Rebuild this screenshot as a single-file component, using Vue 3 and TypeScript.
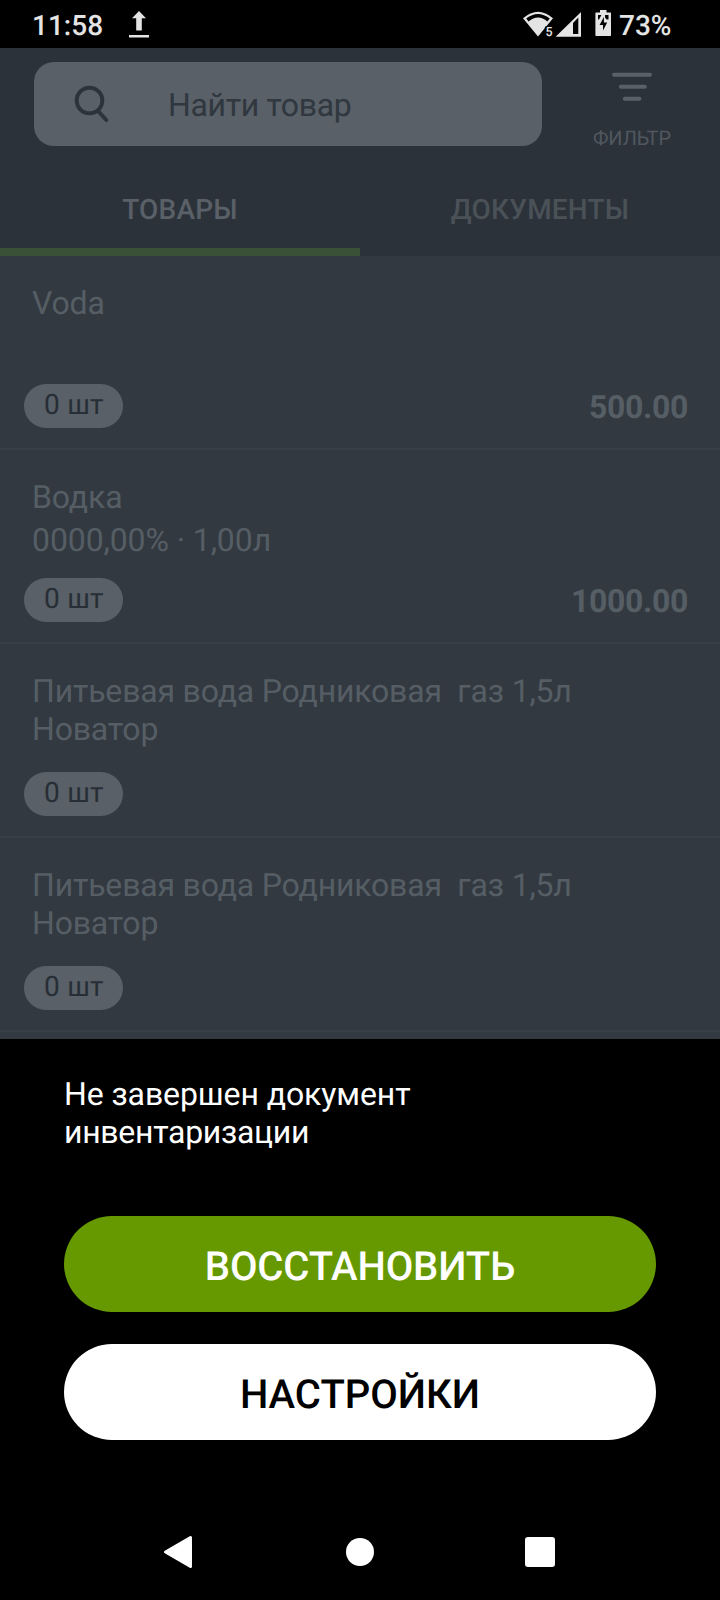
<script setup lang="ts">
interface Product {
  id: number
  lines: string[]
  quantity: string
  price?: string
  spaced?: boolean
}

const products: Product[] = [
  { id: 1, lines: ['Voda'], quantity: '0 шт', price: '500.00' },
  { id: 2, lines: ['Водка', '0000,00% · 1,00л'], quantity: '0 шт', price: '1000.00', spaced: true },
  { id: 3, lines: ['Питьевая вода Родниковая  газ 1,5л', 'Новатор'], quantity: '0 шт' },
  { id: 4, lines: ['Питьевая вода Родниковая  газ 1,5л', 'Новатор'], quantity: '0 шт' },
]
</script>

<template>
  <div class="screen">
    <div class="status">
      <span class="time">11:58</span>
      <svg class="upload" width="20" height="28" viewBox="0 0 20 28">
        <path d="M10 1 L17 8.3 H12.8 V20.5 H7.2 V8.3 H3 Z M0 25 H20 V27.6 H0 Z" fill="#e4e4e4" />
      </svg>
      <svg class="signals" width="90" height="30" viewBox="0 0 90 30">
        <path d="M1 9.2 Q16 -3.8 31 9.2 L16 27.5 Z" fill="#e4e4e4" />
        <path d="M4.2 9.6 Q16 0.6 27.8 9.6 L25.4 12.4 Q16 4.6 6.6 12.4 Z" fill="#000" />
        <path d="M23 17.5 H32 V29 H21.5 Z" fill="#000" />
        <text x="23.6" y="27.4" class="band">5</text>
        <path d="M33.6 27.8 L59 3 V27.8 Z" fill="#e4e4e4" />
        <path d="M51 14 L56.3 8.5 V25 H51 Z" fill="#000" />
        <path d="M78 1 H84.5 V3.5 H88.5 Q89 3.5 89 4.2 V26.2 Q89 27 88.2 27 H74.2 Q73.4 27 73.4 26.2 V4.2 Q73.4 3.5 74 3.5 H78 Z" fill="#e4e4e4" />
        <path d="M76 6 H79.4 L77 10.5 H76 Z M83 6 H86.5 V10.5 H84.6 L83 8.5 Z M81.9 8 V13.6 H85.2 L81 21.5 V16 H77.6 Z" fill="#000" />
      </svg>
      <span class="charge">73%</span>
    </div>

    <header class="header">
      <div class="tools">
        <div class="search">
          <svg width="36" height="38" viewBox="0 0 36 38" fill="none" stroke="#2c333b" stroke-width="4" stroke-linecap="round">
            <circle cx="15.5" cy="15.5" r="12.8" />
            <path d="M24.5 26.5 L32.3 35" />
          </svg>
          <span>Найти товар</span>
        </div>
        <div class="filter">
          <svg width="40" height="30" viewBox="0 0 40 30" stroke="#596067" stroke-width="4" stroke-linecap="round">
            <path d="M2 2.8 H38 M8.8 14.8 H32.8 M12.8 26.8 H27.4" />
          </svg>
          <span>ФИЛЬТР</span>
        </div>
      </div>
      <nav class="tabs">
        <div class="tab active">ТОВАРЫ</div>
        <div class="tab">ДОКУМЕНТЫ</div>
      </nav>
    </header>

    <main class="list">
      <article v-for="p in products" :key="p.id" class="row">
        <div class="title" :class="{ spaced: p.spaced }">
          <div v-for="line in p.lines" :key="line">{{ line }}</div>
        </div>
        <div class="bottom">
          <span class="pill">{{ p.quantity }}</span>
          <span v-if="p.price" class="price">{{ p.price }}</span>
        </div>
      </article>
    </main>

    <section class="sheet">
      <p class="message">Не завершен документ<br /><span>инвентаризации</span></p>
      <button class="btn primary">ВОССТАНОВИТЬ</button>
      <button class="btn">НАСТРОЙКИ</button>
    </section>

    <footer class="navbar">
      <svg width="34" height="34" viewBox="0 0 34 34"><path d="M4.5 17 L29.5 2.5 V31.5 Z" fill="#fff" stroke="#fff" stroke-width="3" stroke-linejoin="round" /></svg>
      <svg width="28" height="28" viewBox="0 0 28 28"><circle cx="14" cy="14" r="14" fill="#fff" /></svg>
      <svg width="30" height="30" viewBox="0 0 30 30"><rect width="30" height="30" rx="3" fill="#fff" /></svg>
    </footer>
  </div>
</template>

<style>
body {
  margin: 0;
  background: #000;
}
</style>

<style scoped>
.screen {
  width: 720px;
  height: 1600px;
  display: flex;
  flex-direction: column;
  overflow: hidden;
  background: #000;
  font-family: Roboto, "Liberation Sans", sans-serif;
  font-size: 32px;
  line-height: 38px;
  text-rendering: geometricPrecision;
}
.status {
  flex: none;
  height: 48px;
  box-sizing: border-box;
  padding: 11px 48px 0 32px;
  display: flex;
  align-items: flex-start;
  color: #e4e4e4;
  font-size: 28px;
  font-weight: 500;
  line-height: 30px;
}
.time {
  width: 97px;
}
.upload {
  margin-top: -1px;
}
.signals {
  flex: none;
  margin-left: 373px;
  margin-top: -2px;
}
.band {
  font-size: 12.5px;
  font-weight: 500;
  fill: #e4e4e4;
}
.charge {
  margin-left: 7px;
}
.header {
  flex: none;
  height: 208px;
  background: #2c323a;
  display: flex;
  flex-direction: column;
  justify-content: space-between;
}
.tools {
  display: flex;
  padding: 14px 0 0 34px;
}
.search {
  flex: none;
  width: 508px;
  height: 84px;
  box-sizing: border-box;
  padding-left: 40px;
  border-radius: 20px;
  background: #596067;
  color: #30373f;
  display: flex;
  align-items: center;
}
.search span {
  margin-left: 58px;
  padding-top: 2px;
  letter-spacing: -0.35px;
}
.filter {
  flex: none;
  width: 180px;
  padding-top: 10px;
  display: flex;
  flex-direction: column;
  align-items: center;
  gap: 24px;
  color: #50575e;
  font-size: 20px;
  line-height: 24px;
  letter-spacing: -0.1px;
}
.tabs {
  display: flex;
  height: 96px;
}
.tab {
  flex: 1;
  box-sizing: border-box;
  height: 96px;
  padding-bottom: 8px;
  line-height: 99px;
  text-align: center;
  font-size: 28px;
  font-weight: 500;
  letter-spacing: 0.2px;
  color: #4a5157;
}
.tab.active {
  color: #596067;
  border-bottom: 8px solid #3a5037;
}
.list {
  flex: none;
  height: 783px;
  overflow: hidden;
  background: #333940;
}
.row {
  height: 194px;
  box-sizing: border-box;
  padding: 28px 32px 20px 24px;
  border-bottom: 2px solid #373f46;
  display: flex;
  flex-direction: column;
  justify-content: space-between;
  color: #565e65;
}
.title {
  padding-left: 8px;
  white-space: pre;
  letter-spacing: -0.18px;
}
.title.spaced {
  display: flex;
  flex-direction: column;
  gap: 5px;
  margin-bottom: -5px;
  letter-spacing: -0.1px;
}
.bottom {
  display: flex;
  justify-content: space-between;
  align-items: flex-end;
}
.pill {
  width: 99px;
  height: 44px;
  box-sizing: border-box;
  padding-left: 20px;
  border-radius: 22px;
  background: #596067;
  color: #272e36;
  font-size: 28px;
  line-height: 41px;
  letter-spacing: 0.25px;
}
.price {
  font-weight: 700;
  line-height: 38px;
  padding-bottom: 2px;
  letter-spacing: -0.35px;
}
.sheet {
  flex: none;
  height: 465px;
  box-sizing: border-box;
  padding: 36px 64px 0;
  color: #fff;
}
.message {
  margin: 0 0 65px;
  letter-spacing: -0.1px;
}
.message span {
  letter-spacing: -0.29px;
}
.btn {
  display: block;
  width: 592px;
  height: 96px;
  margin: 0 0 32px;
  padding: 5px 0 0;
  border: 0;
  border-radius: 48px;
  background: #fff;
  color: #000;
  font-family: inherit;
  font-size: 40px;
  font-weight: 500;
  line-height: 48px;
  text-rendering: inherit;
}
.btn.primary {
  background: #669900;
  color: #fff;
  letter-spacing: -0.15px;
}
.navbar {
  flex: none;
  height: 96px;
  box-sizing: border-box;
  padding: 0 165px 0 161px;
  display: flex;
  align-items: center;
  justify-content: space-between;
}
</style>
